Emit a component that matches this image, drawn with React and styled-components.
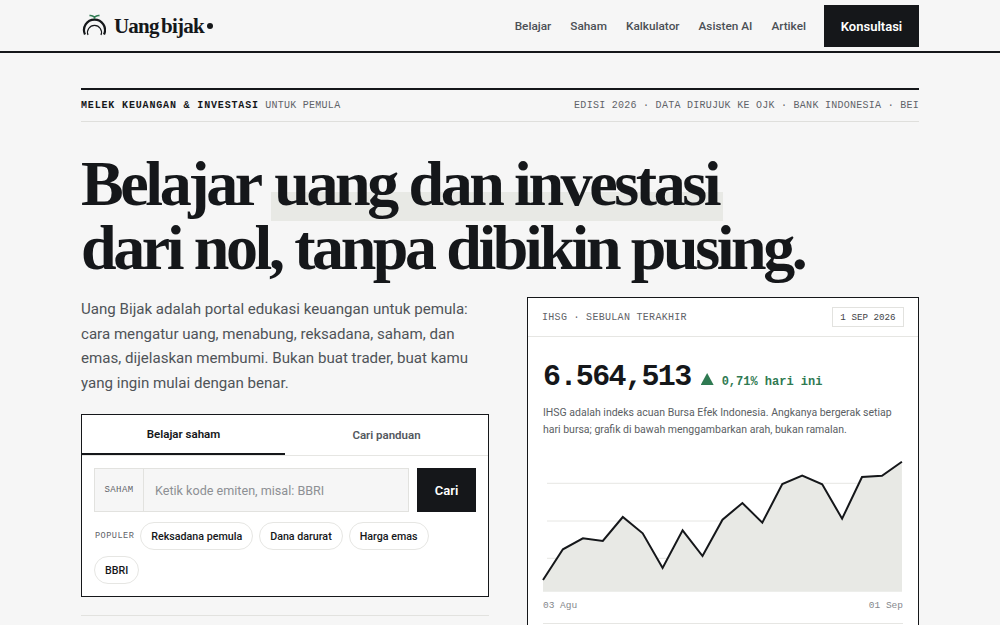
import styled, { createGlobalStyle } from 'styled-components';

const sans = '"Roboto", "Liberation Sans", sans-serif';
const mono = '"Liberation Mono", "DejaVu Sans Mono", monospace';
const serif = '"Liberation Serif", serif';

const GlobalStyle = createGlobalStyle`
  html, body {
    margin: 0;
    height: 625px;
    overflow: hidden;
    background: #f6f6f6;
    color: #15171a;
    font-family: ${sans};
  }
  * { box-sizing: border-box; }
`;

const Header = styled.header`
  height: 53px;
  border-bottom: 2px solid #15171a;
  padding: 5px 81px 0;
  display: flex;
  justify-content: space-between;
`;
const Brand = styled.div`
  display: flex;
  align-items: center;
  gap: 8px;
  height: 42px;
  padding-left: 1px;
  font-family: ${serif};
  font-weight: 700;
  font-size: 21px;
  letter-spacing: -0.8px;
  word-spacing: -2px;
`;
const Dot = styled.span`
  width: 6px;
  height: 6px;
  margin-left: -5px;
  border-radius: 50%;
  background: #15171a;
`;
const Nav = styled.nav`
  display: flex;
  align-items: center;
  height: 42px;
  gap: 19px;
`;
const NavLink = styled.a`
  font-size: 11.8px;
  font-weight: 500;
  color: #4b4f55;
`;
const Cta = styled.a`
  width: 95px;
  height: 42px;
  margin-left: -1px;
  display: flex;
  align-items: center;
  justify-content: center;
  background: #15171a;
  color: #fff;
  font-size: 13px;
  font-weight: 600;
`;
const Main = styled.main`
  padding: 35px 81px 0;
`;
const Masthead = styled.div`
  height: 34px;
  border-top: 2px solid #15171a;
  border-bottom: 1px solid #dfdfdc;
  display: flex;
  align-items: center;
  justify-content: space-between;
  font-family: ${mono};
  font-size: 10px;
  letter-spacing: 0.27px;
  color: #5f6368;
  white-space: nowrap;
`;
const Strong = styled.b`
  color: #15171a;
  font-weight: 700;
  letter-spacing: 0.84px;
`;
const Title = styled.h1`
  margin: 30px 0 0;
  font-family: ${serif};
  font-weight: 700;
  font-size: 64px;
  line-height: 64px;
  letter-spacing: -3.4px;
  white-space: nowrap;
`;
const Mark = styled.span`
  background: linear-gradient(transparent 60%, #e8e9e5 60%);
  padding: 0 5px 2px 3px;
`;
const Columns = styled.div`
  margin-top: 17px;
  display: grid;
  grid-template-columns: 408px 392px;
  justify-content: space-between;
  align-items: start;
`;
const Lede = styled.p`
  margin: 0;
  font-size: 15.1px;
  line-height: 24.5px;
  color: #4f5358;
`;
const SearchCard = styled.section`
  margin-top: 19px;
  background: #fff;
  border: 1px solid #15171a;
  height: 183px;
`;
const Tabs = styled.div`
  display: grid;
  grid-template-columns: 1fr 1fr;
  height: 41px;
  border-bottom: 1px solid #e6e6e3;
`;
const Tab = styled.div`
  display: flex;
  align-items: center;
  justify-content: center;
  font-size: 11.5px;
  font-weight: 600;
  color: ${(p) => (p.$active ? '#15171a' : '#54585e')};
  border-bottom: ${(p) => (p.$active ? '2px solid #15171a' : '0')};
`;
const SearchBody = styled.div`
  padding: 12px;
`;
const SearchRow = styled.div`
  display: flex;
  gap: 8px;
  height: 44px;
`;
const Field = styled.div`
  flex: 1;
  display: flex;
  background: #f6f6f6;
  border: 1px solid #e2e2df;
`;
const FieldTag = styled.span`
  width: 49px;
  border-right: 1px solid #e2e2df;
  display: flex;
  align-items: center;
  justify-content: center;
  font-family: ${mono};
  font-size: 9px;
  letter-spacing: 0.4px;
  color: #5f6368;
`;
const Placeholder = styled.span`
  padding-left: 11px;
  display: flex;
  align-items: center;
  font-size: 12.6px;
  color: #8d9094;
`;
const SearchButton = styled.button`
  width: 59px;
  border: 0;
  background: #15171a;
  color: #fff;
  font-family: ${sans};
  font-size: 13px;
  font-weight: 600;
`;
const Chips = styled.div`
  margin-top: 10px;
  display: flex;
  flex-wrap: wrap;
  align-items: center;
  gap: 6px;
`;
const ChipLabel = styled.span`
  margin-left: 1px;
  font-family: ${mono};
  font-size: 8.6px;
  letter-spacing: 0.45px;
  color: #5f6368;
`;
const Chip = styled.span`
  height: 28px;
  padding: 0 10px;
  display: flex;
  align-items: center;
  border: 1px solid #e6e6e3;
  border-radius: 14px;
  font-size: 10.7px;
  font-weight: 500;
`;
const Rule = styled.div`
  margin-top: 18px;
  border-top: 1px solid #e2e2df;
`;
const ChartCard = styled.section`
  background: #fff;
  border: 1px solid #15171a;
`;
const CardHead = styled.div`
  height: 39px;
  padding: 0 14px;
  border-bottom: 1px solid #e6e6e3;
  display: flex;
  align-items: center;
  justify-content: space-between;
  font-family: ${mono};
  font-size: 10px;
  letter-spacing: 0.3px;
  color: #5f6368;
`;
const DateTag = styled.span`
  height: 20px;
  padding: 0 7.5px;
  display: flex;
  align-items: center;
  border: 1px solid #e2e2df;
  font-size: 9.2px;
  letter-spacing: 0;
  color: #3f4347;
`;
const CardBody = styled.div`
  padding: 22px 15px 40px;
`;
const PriceRow = styled.div`
  display: flex;
  align-items: baseline;
  gap: 10px;
  font-family: ${mono};
`;
const Price = styled.span`
  font-size: 30px;
  font-weight: 700;
  letter-spacing: -1.6px;
  line-height: 36px;
`;
const Change = styled.span`
  display: flex;
  align-items: baseline;
  gap: 8px;
  font-size: 12px;
  font-weight: 700;
  color: #2f7a52;
`;
const Triangle = styled.span`
  width: 13px;
  height: 12px;
  background: #2f7a52;
  clip-path: polygon(50% 0, 100% 100%, 0 100%);
`;
const Note = styled.p`
  margin: 9px 0 0;
  font-size: 10.5px;
  line-height: 17px;
  color: #5a5e63;
`;
const ChartSvg = styled.svg`
  display: block;
  margin-top: 17px;
  width: 359px;
  height: 137px;
  overflow: visible;
`;
const Axis = styled.div`
  margin-top: 8px;
  padding-bottom: 12px;
  display: flex;
  justify-content: space-between;
  border-bottom: 1px solid #e6e6e3;
  font-family: ${mono};
  font-size: 9.5px;
  color: #85888c;
`;

const navItems = ['Belajar', 'Saham', 'Kalkulator', 'Asisten AI', 'Artikel'];
const chips = ['Reksadana pemula', 'Dana darurat', 'Harga emas', 'BBRI'];
const ys = [125, 94.3, 83.3, 86, 62, 78.3, 113, 75.3, 101, 64.7, 48, 67.7, 29, 20.7, 29.3, 63.7, 22, 20.7, 6.7];
const line = ys.map((y, i) => `${(i * 19.94).toFixed(1)},${y}`).join(' ');

function Logo() {
  return (
    <svg width="24" height="24" viewBox="0 0 24 24" fill="none">
      <path d="M3 20.5 A10.5 10.5 0 1 1 22 20.5" stroke="#15171a" strokeWidth="2.2" />
      <path d="M6 21 A7 7 0 1 1 19 21" stroke="#15171a" strokeWidth="1.2" />
      <path d="M12.5 5 V2 M12.5 3.2 Q10 1 7.5 1.6 M12.5 3.2 Q15 1 17.5 1.6" stroke="#2f7a52" strokeWidth="1.6" />
    </svg>
  );
}

export default function App() {
  return (
    <>
      <GlobalStyle />
      <Header>
        <Brand>
          <Logo />
          Uang bijak
          <Dot />
        </Brand>
        <Nav>
          {navItems.map((item) => (
            <NavLink key={item}>{item}</NavLink>
          ))}
          <Cta>Konsultasi</Cta>
        </Nav>
      </Header>
      <Main>
        <Masthead>
          <span>
            <Strong>MELEK KEUANGAN &amp; INVESTASI</Strong> UNTUK PEMULA
          </span>
          <span>EDISI 2026 · DATA DIRUJUK KE OJK · BANK INDONESIA · BEI</span>
        </Masthead>
        <Title>
          Belajar <Mark>uang dan investasi</Mark>
          <br />
          dari nol, tanpa dibikin pusing.
        </Title>
        <Columns>
          <div>
            <Lede>
              Uang Bijak adalah portal edukasi keuangan untuk pemula: cara mengatur uang, menabung, reksadana, saham,
              dan emas, dijelaskan membumi. Bukan buat trader, buat kamu yang ingin mulai dengan benar.
            </Lede>
            <SearchCard>
              <Tabs>
                <Tab $active>Belajar saham</Tab>
                <Tab>Cari panduan</Tab>
              </Tabs>
              <SearchBody>
                <SearchRow>
                  <Field>
                    <FieldTag>SAHAM</FieldTag>
                    <Placeholder>Ketik kode emiten, misal: BBRI</Placeholder>
                  </Field>
                  <SearchButton>Cari</SearchButton>
                </SearchRow>
                <Chips>
                  <ChipLabel>POPULER</ChipLabel>
                  {chips.map((chip) => (
                    <Chip key={chip}>{chip}</Chip>
                  ))}
                </Chips>
              </SearchBody>
            </SearchCard>
            <Rule />
          </div>
          <ChartCard>
            <CardHead>
              <span>IHSG · SEBULAN TERAKHIR</span>
              <DateTag>1 SEP 2026</DateTag>
            </CardHead>
            <CardBody>
              <PriceRow>
                <Price>6.564,513</Price>
                <Change>
                  <Triangle />
                  0,71% hari ini
                </Change>
              </PriceRow>
              <Note>
                IHSG adalah indeks acuan Bursa Efek Indonesia. Angkanya bergerak setiap hari bursa; grafik di bawah
                menggambarkan arah, bukan ramalan.
              </Note>
              <ChartSvg viewBox="0 0 359 137">
                {[28.3, 66, 103.3].map((y) => (
                  <line key={y} x1="4" x2="359" y1={y} y2={y} stroke="#e6e6e3" />
                ))}
                <polygon points={`0,136.7 ${line} 359,136.7`} fill="#e8e9e5" />
                <polyline points={line} fill="none" stroke="#15171a" strokeWidth="2" />
              </ChartSvg>
              <Axis>
                <span>03 Agu</span>
                <span>01 Sep</span>
              </Axis>
            </CardBody>
          </ChartCard>
        </Columns>
      </Main>
    </>
  );
}
